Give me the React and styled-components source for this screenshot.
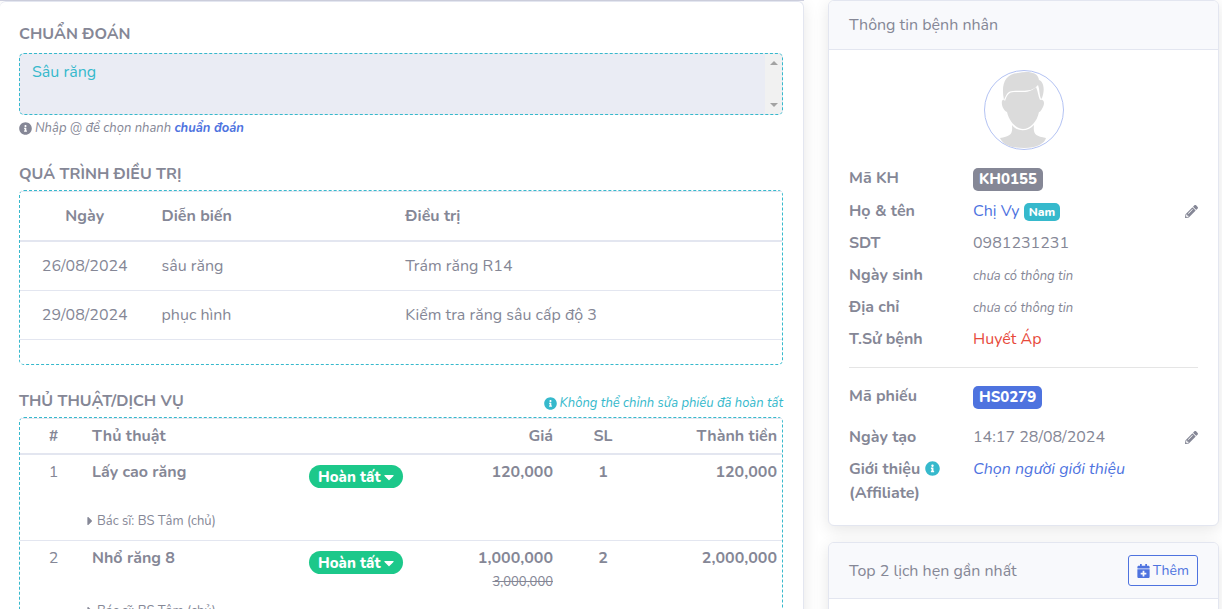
import React from "react";
import styled, { createGlobalStyle, css } from "styled-components";
import {
  FaCalendarPlus,
  FaCaretDown,
  FaCaretRight,
  FaInfoCircle,
  FaPencilAlt,
} from "react-icons/fa";

const color = {
  text: "#858796",
  line: "#e3e6f0",
  soft: "#f8f9fc",
  primary: "#4e73df",
  info: "#36b9cc",
  success: "#1cc88a",
  danger: "#e74a3b",
};

const GlobalStyle = createGlobalStyle`
  *, *::before, *::after { box-sizing: border-box; }
  html { scrollbar-width: none; }
  body {
    margin: 0;
    background: #fff;
    color: ${color.text};
    font: 400 16px/24px Nunito, Lato, "Noto Sans", sans-serif;
  }
  a { color: ${color.primary}; text-decoration: none; }
  button, textarea { font: inherit; }
`;

const Page = styled.div`
  display: grid;
  grid-template-columns: minmax(0, 804fr) minmax(0, 391fr);
  gap: 24px;
  align-items: start;
  padding-right: 3px;
`;

const Main = styled.main`
  border-top: 1px solid #d1d3e2;
`;

const Aside = styled.aside`
  display: flex;
  flex-direction: column;
  gap: 16px;
`;

const Card = styled.section`
  background: #fff;
  border: 1px solid ${color.line};
  border-radius: 6px;
  box-shadow: 0 4px 16px rgba(0, 0, 0, 0.1);
`;

const RecordCard = styled(Card)`
  display: flex;
  flex-direction: column;
  gap: 24px;
  padding: 20px 20px 20px 19px;
  border-left: 0;
`;

const CardHeader = styled.header`
  display: flex;
  align-items: center;
  justify-content: space-between;
  padding: 12px 20px;
  background: ${color.soft};
  border-bottom: 1px solid ${color.line};
  border-radius: 5px 5px 0 0;
`;

const CardTitle = styled.h2`
  margin: 0;
  font-size: 16px;
  font-weight: 400;
`;

const CardBody = styled.div`
  padding: 20px;
  min-height: ${(p) => p.$minHeight || 0}px;
`;

const SectionTitle = styled.h3`
  margin: 0;
  font-size: 16px;
  font-weight: 700;
`;

const SectionHead = styled.div`
  display: flex;
  align-items: flex-end;
  justify-content: space-between;
  margin-bottom: 4px;
  height: 24px;
`;

const Note = styled.small`
  display: flex;
  align-items: center;
  gap: 3px;
  padding-top: 3px;
  font-size: 13px;
  font-style: italic;
  line-height: 20px;
  color: ${(p) => (p.$info ? color.info : "inherit")};
`;

const DiagnosisLabel = styled.label`
  display: block;
  margin-bottom: 7px;
  font-weight: 700;
`;

const DiagnosisBox = styled.div`
  display: flex;
  height: 62px;
  background: #eaecf4;
  border: 1px dashed ${color.info};
  border-radius: 5px;
  overflow: hidden;
`;

const Diagnosis = styled.textarea`
  flex: 1;
  min-width: 0;
  padding: 6px 12px;
  resize: none;
  overflow: hidden;
  color: ${color.info};
  background: none;
  border: 0;
  outline: 0;
`;

const ScrollTrack = styled.div`
  display: flex;
  flex-direction: column;
  align-items: center;
  justify-content: space-between;
  width: 17px;
  padding: 7px 0;
  background: #f1f1f1;
`;

const ScrollArrow = styled.i`
  border: 4px solid transparent;
  ${(p) =>
    p.$up
      ? "border-top: 0; border-bottom-color: #a3a3a3;"
      : "border-bottom: 0; border-top-color: #a3a3a3;"}
`;

const TableFrame = styled.div`
  border: 1px dashed ${color.info};
  border-radius: 5px;
  padding-bottom: ${(p) => p.$bottom || 0}px;
`;

const Table = styled.table`
  width: 100%;
  table-layout: fixed;
  border-spacing: 0;
`;

const cell = css`
  padding: ${(p) => (p.$dense ? 5 : 12)}px;
  text-align: ${(p) => p.$align || "left"};
  vertical-align: top;
`;

const Th = styled.th`
  ${cell}
  font-weight: 700;
  border-top: 1px solid ${color.line};
  border-bottom: 2px solid ${color.line};
`;

const Td = styled.td`
  ${cell}
  font-weight: ${(p) => (p.$bold ? 700 : 400)};
`;

const ProgressTd = styled(Td)`
  border-bottom: 1px solid ${color.line};
`;

const ServiceRow = styled.tr`
  height: 54px;
`;

const DoctorCell = styled.td`
  padding: 0 0 7px;
  border-bottom: 1px solid ${color.line};
`;

const Doctor = styled.div`
  display: flex;
  align-items: center;
  gap: 4px;
  font-size: 13px;
  svg { width: 6px; }
`;

const OldPrice = styled.s`
  display: block;
  font-size: 13px;
  font-weight: 400;
`;

const StatusButton = styled.button`
  display: flex;
  align-items: center;
  gap: 4px;
  height: 23px;
  margin-top: 5px;
  padding: 0 9px;
  white-space: nowrap;
  color: #fff;
  background: ${color.success};
  border: 0;
  border-radius: 12px;
  font-size: 15px;
  font-weight: 800;
  line-height: 24px;
  svg { width: 10px; }
`;

const Avatar = styled.svg`
  display: block;
  width: 80px;
  height: 80px;
  margin: 0 auto 16px;
`;

const Facts = styled.dl`
  display: flex;
  flex-direction: column;
  gap: 8px;
  margin: 0;
`;

const Fact = styled.div`
  display: grid;
  grid-template-columns: 124px minmax(0, 1fr) auto;
  min-height: ${(p) => (p.$tagged ? 25 : 24)}px;
  margin-bottom: ${(p) => (p.$spaced ? 8 : 0)}px;
`;

const Term = styled.dt`
  font-weight: 700;
  svg {
    vertical-align: -2px;
    color: ${color.info};
  }
`;

const Value = styled.dd`
  margin: 0;
  color: ${(p) => (p.$danger ? color.danger : "inherit")};
`;

const Missing = styled.em`
  font-size: 13px;
  line-height: 16px;
`;

const CodeTag = styled.span`
  display: block;
  width: fit-content;
  height: 23px;
  margin-top: 2px;
  padding: 0 6px;
  color: #fff;
  background: ${(p) => p.$bg};
  border-radius: 5px;
  font-size: 15px;
  font-weight: 800;
  line-height: 22px;
`;

const GenderTag = styled.span`
  display: inline-block;
  padding: 0 5px;
  color: #fff;
  background: ${color.info};
  border-radius: 5px;
  font-size: 12px;
  font-weight: 800;
  line-height: 18px;
`;

const IconButton = styled.button`
  display: flex;
  align-items: center;
  padding: 0;
  color: ${color.text};
  background: none;
  border: 0;
`;

const Divider = styled.hr`
  margin: 16px 0;
  border: 0;
  border-top: 1px solid #e5e5e5;
`;

const AddButton = styled.button`
  display: flex;
  align-items: center;
  gap: 3px;
  height: 31px;
  padding: 0 8px;
  color: ${color.primary};
  background: ${color.soft};
  border: 1px solid ${color.primary};
  border-radius: 3px;
  font-size: 14px;
  svg { width: 13px; }
`;

const progress = [
  ["26/08/2024", "sâu răng", "Trám răng R14"],
  ["29/08/2024", "phục hình", "Kiểm tra răng sâu cấp độ 3"],
];

const services = [
  { name: "Lấy cao răng", price: "120,000", qty: 1, total: "120,000" },
  { name: "Nhổ răng 8", price: "1,000,000", old: "3,000,000", qty: 2, total: "2,000,000" },
];

function ServiceLines({ index, item }) {
  return (
    <>
      <ServiceRow>
        <Td $dense $align="center">{index}</Td>
        <Td $dense $bold>{item.name}</Td>
        <Td $dense>
          <StatusButton type="button">
            Hoàn tất <FaCaretDown size={16} />
          </StatusButton>
        </Td>
        <Td $dense $bold $align="right">
          {item.price}
          {item.old && <OldPrice>{item.old}</OldPrice>}
        </Td>
        <Td $dense $bold $align="center">{item.qty}</Td>
        <Td $dense $bold $align="right">{item.total}</Td>
      </ServiceRow>
      <tr>
        <DoctorCell />
        <DoctorCell colSpan={5}>
          <Doctor>
            <FaCaretRight size={14} />
            Bác sĩ: BS Tâm (chủ)
          </Doctor>
        </DoctorCell>
      </tr>
    </>
  );
}

function EditButton({ label }) {
  return (
    <IconButton type="button" aria-label={label}>
      <FaPencilAlt size={13} />
    </IconButton>
  );
}

function PatientPortrait() {
  return (
    <Avatar viewBox="0 0 80 80" role="img" aria-label="Ảnh bệnh nhân">
      <circle cx="40" cy="40" r="39.5" fill="#fff" stroke="#b4c3f3" />
      <g fill="#dbdbdb">
        <path d="M20 30C17 16 20 4 34 3C44 1 54 2 55 10C60 12 61 20 58 28L57 29C55 25 56 20 54 15C47 23 39 20 29 21C23 21 22 26 20 30Z" />
        <path d="M21 31C23 25 25 22 30 22C40 22 46 23 52 17C54 21 54 26 56 30C60 29 61 33 59 37C57 41 56 42 55 42C53 52 46 59 39 59C32 59 25 51 23 42C20 41 17 35 18 31C19 29 20 30 21 31Z" />
        <path d="M28 55C33 62 44 62 50 55C49 64 51 66 62 68C61 73 53 78 40 78C27 78 19 75 16 68C26 66 29 65 28 55Z" />
      </g>
    </Avatar>
  );
}

export default function App() {
  return (
    <>
      <GlobalStyle />
      <Page>
        <Main>
          <RecordCard>
            <div>
              <DiagnosisLabel htmlFor="diagnosis">CHUẨN ĐOÁN</DiagnosisLabel>
              <DiagnosisBox>
                <Diagnosis id="diagnosis" readOnly defaultValue="Sâu răng" />
                <ScrollTrack aria-hidden="true">
                  <ScrollArrow $up />
                  <ScrollArrow />
                </ScrollTrack>
              </DiagnosisBox>
              <Note>
                <FaInfoCircle size={13} />
                <span>
                  Nhập @ để chọn nhanh <a href="#diagnosis"><b>chuẩn đoán</b></a>
                </span>
              </Note>
            </div>

            <div>
              <SectionHead>
                <SectionTitle>QUÁ TRÌNH ĐIỀU TRỊ</SectionTitle>
              </SectionHead>
              <TableFrame $bottom={24}>
                <Table>
                  <colgroup>
                    <col style={{ width: "17%" }} />
                    <col style={{ width: "32%" }} />
                    <col />
                  </colgroup>
                  <thead>
                    <tr>
                      <Th $align="center">Ngày</Th>
                      <Th>Diễn biến</Th>
                      <Th>Điều trị</Th>
                    </tr>
                  </thead>
                  <tbody>
                    {progress.map(([date, change, treatment]) => (
                      <tr key={date}>
                        <ProgressTd $align="center">{date}</ProgressTd>
                        <ProgressTd>{change}</ProgressTd>
                        <ProgressTd>{treatment}</ProgressTd>
                      </tr>
                    ))}
                  </tbody>
                </Table>
              </TableFrame>
            </div>

            <div>
              <SectionHead>
                <SectionTitle>THỦ THUẬT/DỊCH VỤ</SectionTitle>
                <Note $info>
                  <FaInfoCircle size={13} />
                  Không thể chỉnh sửa phiếu đã hoàn tất
                </Note>
              </SectionHead>
              <TableFrame>
                <Table>
                  <colgroup>
                    <col style={{ width: 67 }} />
                    <col />
                    <col style={{ width: 104 }} />
                    <col style={{ width: 150 }} />
                    <col style={{ width: 90 }} />
                    <col style={{ width: 134 }} />
                  </colgroup>
                  <thead>
                    <tr>
                      <Th $dense $align="center">#</Th>
                      <Th $dense colSpan={2}>Thủ thuật</Th>
                      <Th $dense $align="right">Giá</Th>
                      <Th $dense $align="center">SL</Th>
                      <Th $dense $align="right">Thành tiền</Th>
                    </tr>
                  </thead>
                  <tbody>
                    {services.map((item, i) => (
                      <ServiceLines key={item.name} index={i + 1} item={item} />
                    ))}
                  </tbody>
                </Table>
              </TableFrame>
            </div>
          </RecordCard>
        </Main>

        <Aside>
          <Card>
            <CardHeader>
              <CardTitle>Thông tin bệnh nhân</CardTitle>
            </CardHeader>
            <CardBody>
              <PatientPortrait />
              <Facts>
                <Fact $tagged>
                  <Term>Mã KH</Term>
                  <Value><CodeTag $bg={color.text}>KH0155</CodeTag></Value>
                </Fact>
                <Fact>
                  <Term>Họ &amp; tên</Term>
                  <Value>
                    <a href="#patient">Chị Vy</a> <GenderTag>Nam</GenderTag>
                  </Value>
                  <EditButton label="Sửa họ tên" />
                </Fact>
                <Fact>
                  <Term>SDT</Term>
                  <Value>0981231231</Value>
                </Fact>
                <Fact>
                  <Term>Ngày sinh</Term>
                  <Value><Missing>chưa có thông tin</Missing></Value>
                </Fact>
                <Fact>
                  <Term>Địa chỉ</Term>
                  <Value><Missing>chưa có thông tin</Missing></Value>
                </Fact>
                <Fact>
                  <Term>T.Sử bệnh</Term>
                  <Value $danger>Huyết Áp</Value>
                </Fact>
              </Facts>
              <Divider />
              <Facts>
                <Fact $tagged $spaced>
                  <Term>Mã phiếu</Term>
                  <Value><CodeTag $bg={color.primary}>HS0279</CodeTag></Value>
                </Fact>
                <Fact>
                  <Term>Ngày tạo</Term>
                  <Value>14:17 28/08/2024</Value>
                  <EditButton label="Sửa ngày tạo" />
                </Fact>
                <Fact>
                  <Term>
                    Giới thiệu <FaInfoCircle size={15} />
                    <br />
                    (Affiliate)
                  </Term>
                  <Value>
                    <a href="#affiliate"><em>Chọn người giới thiệu</em></a>
                  </Value>
                </Fact>
              </Facts>
            </CardBody>
          </Card>

          <Card>
            <CardHeader>
              <CardTitle>Top 2 lịch hẹn gần nhất</CardTitle>
              <AddButton type="button">
                <FaCalendarPlus size={14} />
                Thêm
              </AddButton>
            </CardHeader>
            <CardBody $minHeight={80} />
          </Card>
        </Aside>
      </Page>
    </>
  );
}
